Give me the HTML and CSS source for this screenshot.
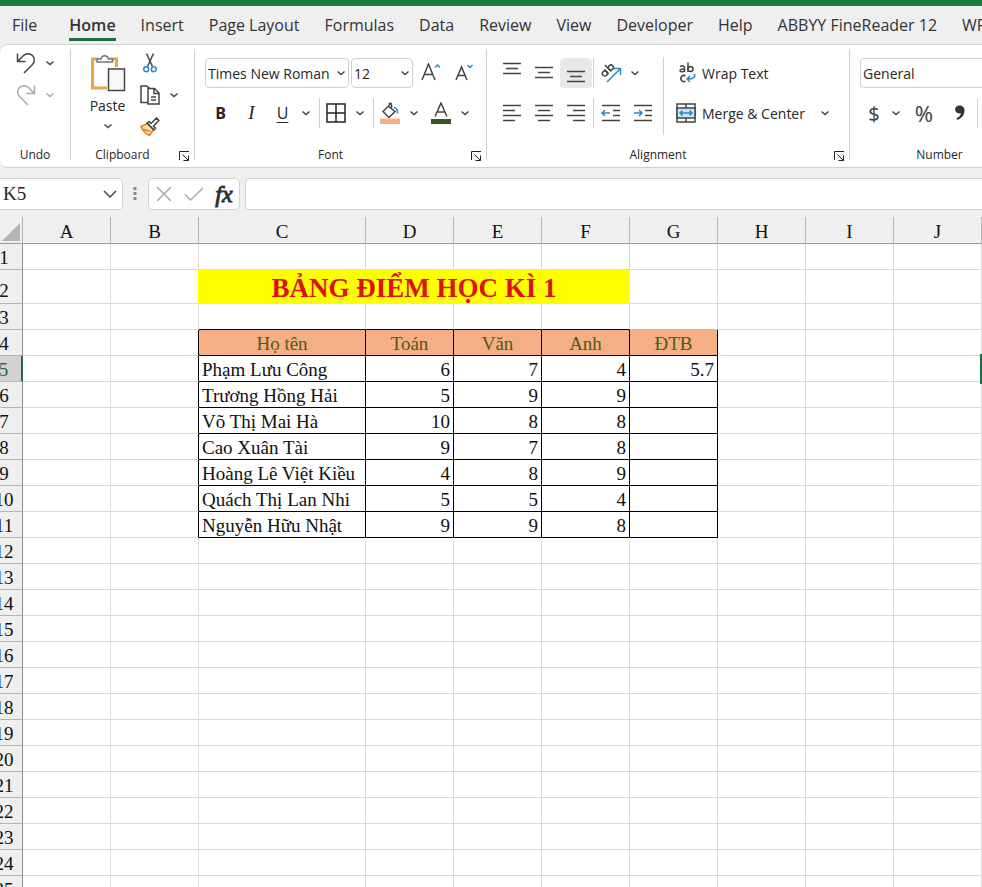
FILE: index.html
```
<!DOCTYPE html>
<html lang="vi">
<head>
    <meta charset="UTF-8">
    <meta name="viewport" content="width=device-width, initial-scale=1.0">
    <title>Bảng điểm</title>
    <link rel="stylesheet" href="styles.css">
</head>
<body>
    <!-- shared icons -->
    <svg class="sprite" aria-hidden="true">
        <symbol id="chevron" viewBox="0 0 10 10"><path d="M1.500 3.500L5 6.500l3.500-3" /></symbol>
        <symbol id="launcher" viewBox="0 0 12 12"><path d="M1.5 10V1.5H11M4.5 4.5l6 6M10.500 5.500v5h-5" /></symbol>
    </svg>

    <div class="title-strip"></div>
    <nav class="tabs">
        <a href="#" class="file">File</a>
        <a href="#" class="active">Home</a>
        <a href="#">Insert</a>
        <a href="#">Page Layout</a>
        <a href="#">Formulas</a>
        <a href="#">Data</a>
        <a href="#">Review</a>
        <a href="#">View</a>
        <a href="#">Developer</a>
        <a href="#">Help</a>
        <a href="#">ABBYY FineReader 12</a>
        <a href="#">WPS PDF</a>
    </nav>

    <div class="ribbon">
        <div class="group undo">
            <div class="stack">
                <div class="row">
                    <button class="btn" aria-label="Undo"><svg width="20" height="22" viewBox="0 0 20 22"><path d="M1.500 1.500v8h8M2 9l5.500-5.500a6.300 6.300 0 0 1 9 9L8 21" /></svg></button>
                    <button class="more" aria-label="Undo list"><svg><use href="#chevron" /></svg></button>
                </div>
                <div class="row off">
                    <button class="btn" aria-label="Redo" disabled><svg width="20" height="22" viewBox="0 0 20 22"><path d="M18.500 1.500v8h-8M18 9l-5.500-5.500a6.300 6.300 0 0 0-9 9L12 21" /></svg></button>
                    <button class="more" aria-label="Redo list" disabled><svg><use href="#chevron" /></svg></button>
                </div>
            </div>
            <div class="caption"><span>Undo</span></div>
        </div>
        <div class="divider"></div>

        <div class="group clipboard">
            <div class="clip-body">
                <button class="paste">
                    <svg width="36" height="40" viewBox="0 0 36 40">
                        <path class="orange" d="M9 6H2.500v29H17M20 6h6.500v8" />
                        <path class="pale" d="M7 9V6h4a3.800 3.800 0 0 1 7.500 0h4v3z" />
                        <path class="sheet" d="M18.500 16h16v21.500h-16z" />
                    </svg>
                    <span>Paste</span>
                    <svg class="chev"><use href="#chevron" /></svg>
                </button>
                <div class="stack">
                    <div class="row">
                        <button class="btn" aria-label="Cut"><svg width="14" height="20" viewBox="0 0 14 20"><path d="M3.500 0.500l6 13M10.500 0.500l-6 13" /><g class="blue"><circle cx="3.200" cy="16.200" r="2.500" /><circle cx="10.800" cy="16.200" r="2.500" /></g></svg></button>
                    </div>
                    <div class="row">
                        <button class="btn" aria-label="Copy"><svg width="20" height="20" viewBox="0 0 20 20"><path d="M8 17.500H1V1h5.500l3 2M8 3.500h6.500L19 8v11H8zM14 4v4.500h5M11 12h5M11 15h5" /></svg></button>
                        <button class="more" aria-label="Copy options"><svg><use href="#chevron" /></svg></button>
                    </div>
                    <div class="row">
                        <button class="btn" aria-label="Format Painter"><svg width="20" height="20" viewBox="0 0 20 20"><path class="brush" d="M7.500 6.500L1 9.500c1.500 4 4.500 7 8.500 9l4-6zM3 12.500l7 1.500" /><path d="M7 6l2-1.500 2 2L16.500 1 19 3.500 13.500 9l2 2-1.500 2z" /></svg></button>
                    </div>
                </div>
            </div>
            <div class="caption"><span>Clipboard</span><button class="launch" aria-label="Clipboard settings"><svg><use href="#launcher" /></svg></button></div>
        </div>
        <div class="divider"></div>

        <div class="group font">
            <div class="rows">
                <div class="row spaced">
                    <div class="pick family">
                        <select aria-label="Font"><option>Times New Roman</option></select>
                        <svg><use href="#chevron" /></svg>
                    </div>
                    <div class="pick size">
                        <select aria-label="Font size"><option>12</option></select>
                        <svg><use href="#chevron" /></svg>
                    </div>
                    <button class="btn" aria-label="Increase font size"><svg width="22" height="20" viewBox="0 0 22 20"><path d="M2 17L8.500 1 15 17M4.500 11.500h8" /><path class="blue" d="M15 4.500l2.500-2.500L20 4.500" /></svg></button>
                    <button class="btn" aria-label="Decrease font size"><svg width="22" height="20" viewBox="0 0 22 20"><path d="M2 17L7.500 4 13 17M4 12.500h7" /><path class="blue" d="M13.500 2l2.500 2.500L18.500 2" /></svg></button>
                </div>
                <div class="row">
                    <button class="btn bold">B</button>
                    <button class="btn italic">I</button>
                    <button class="btn under">U</button>
                    <button class="more" aria-label="Underline options"><svg><use href="#chevron" /></svg></button>
                    <div class="bar"></div>
                    <button class="btn" aria-label="Borders"><svg class="dark" width="20" height="20" viewBox="0 0 20 20"><path d="M1 1h18v18H1zM10 1v18M1 10h18" /></svg></button>
                    <button class="more" aria-label="Border options"><svg><use href="#chevron" /></svg></button>
                    <div class="bar"></div>
                    <button class="btn" aria-label="Fill color"><svg width="22" height="22" viewBox="0 0 22 22"><path d="M9 4l7 5.500-6 6-6-6L10.500 3V1M10.500 1a2 2 0 0 1 2 2v4" /><path class="blue" d="M15 5.500c3 0 3.500 2 3.500 6" /><path class="peach" d="M1 16.500h20V22H1z" /></svg></button>
                    <button class="more" aria-label="Fill options"><svg><use href="#chevron" /></svg></button>
                    <div class="gap"></div>
                    <button class="btn" aria-label="Font color"><svg width="22" height="22" viewBox="0 0 22 22"><path d="M5 14.500L11 1l6 13.500M7 10h8" /><path class="green" d="M1 17h20v5H1z" /></svg></button>
                    <button class="more" aria-label="Font color options"><svg><use href="#chevron" /></svg></button>
                </div>
            </div>
            <div class="caption"><span>Font</span><button class="launch" aria-label="Font settings"><svg><use href="#launcher" /></svg></button></div>
        </div>
        <div class="divider"></div>

        <div class="group alignment">
            <div class="align-body">
                <div class="rows">
                    <div class="row">
                        <button class="btn" aria-label="Top align"><svg width="20" height="22" viewBox="0 0 20 22"><path d="M1 1.500h18M4 6.500h12M1 11.500h18" /></svg></button>
                        <button class="btn" aria-label="Middle align"><svg width="20" height="22" viewBox="0 0 20 22"><path d="M1 5.500h18M4 10.500h12M1 15.500h18" /></svg></button>
                        <button class="btn pressed" aria-label="Bottom align"><svg width="20" height="22" viewBox="0 0 20 22"><path d="M1 9.500h18M4 14.500h12M1 19.500h18" /></svg></button>
                        <div class="bar thin"></div>
                        <button class="btn" aria-label="Orientation"><svg width="22" height="22" viewBox="0 0 22 22"><g transform="rotate(-45 7 8)"><circle cx="3" cy="9" r="2.500" /><path d="M5.500 6v6M9 3v9" /><circle cx="11.500" cy="9" r="2.500" /></g><path class="blue" d="M7 20L20 7M14 6.500h6.500V13" /></svg></button>
                        <button class="more" aria-label="Orientation options"><svg><use href="#chevron" /></svg></button>
                    </div>
                    <div class="row">
                        <button class="btn" aria-label="Align left"><svg width="20" height="20" viewBox="0 0 20 20"><path d="M1 2.500h18M1 7.500h12M1 12.500h18M1 17.500h12" /></svg></button>
                        <button class="btn" aria-label="Center"><svg width="20" height="20" viewBox="0 0 20 20"><path d="M1 2.500h18M4 7.500h12M1 12.500h18M4 17.500h12" /></svg></button>
                        <button class="btn" aria-label="Align right"><svg width="20" height="20" viewBox="0 0 20 20"><path d="M1 2.500h18M7 7.500h12M1 12.500h18M7 17.500h12" /></svg></button>
                        <div class="bar thin"></div>
                        <button class="btn" aria-label="Decrease indent"><svg width="20" height="20" viewBox="0 0 20 20"><path d="M1 2.500h18M12 7.500h7M12 12.500h7M1 17.500h18" /><path class="blue" d="M9 10H1.500M4 7l-3 3 3 3" /></svg></button>
                        <button class="btn" aria-label="Increase indent"><svg width="20" height="20" viewBox="0 0 20 20"><path d="M1 2.500h18M12 7.500h7M12 12.500h7M1 17.500h18" /><path class="blue" d="M1 10h7.500M6 7l3 3-3 3" /></svg></button>
                    </div>
                </div>
                <div class="tall-bar"></div>
                <div class="rows">
                    <button class="wide">
                        <svg width="20" height="22" viewBox="0 0 20 22"><path d="M4 4.500c3-1.500 4.500-.5 4.500 1.500v4M8.500 7C5 7 4 7.500 4 8.700s3 1.800 4.500 0M12 0.500V10M9.500 14a3 3 0 1 0 0 5" /><circle cx="14.500" cy="7" r="2.500" /><path class="blue" d="M18.500 12c1 3-1 5-7 5M14 14l-3 3 3 3" /></svg>
                        <span>Wrap Text</span>
                    </button>
                    <div class="row">
                        <button class="wide">
                            <svg width="20" height="20" viewBox="0 0 20 20"><path d="M1 1h18v18H1zM10 1v4M10 15v4" /><path class="cell" d="M1 5h18v10H1z" /><path class="blue" d="M4 10h12M6.500 7.500L4 10l2.500 2.500M13.500 7.500L16 10l-2.500 2.500" /></svg>
                            <span>Merge &amp; Center</span>
                        </button>
                        <button class="more last" aria-label="Merge options"><svg><use href="#chevron" /></svg></button>
                    </div>
                </div>
            </div>
            <div class="caption"><span>Alignment</span><button class="launch" aria-label="Alignment settings"><svg><use href="#launcher" /></svg></button></div>
        </div>
        <div class="divider"></div>

        <div class="group number">
            <div class="rows">
                <div class="pick format">
                    <select aria-label="Number format"><option>General</option></select>
                    <svg><use href="#chevron" /></svg>
                </div>
                <div class="row">
                    <button class="btn sign">$</button>
                    <button class="more" aria-label="Currency options"><svg><use href="#chevron" /></svg></button>
                    <button class="btn sign percent">%</button>
                    <button class="btn comma-btn" aria-label="Comma style"><svg width="12" height="18" viewBox="0 0 12 18"><path class="comma" d="M5.500 1.500a4 4 0 1 0 1.500 7.500c-.5 2.500-2 4-4.500 5.500l1 1.500C8 14 10.500 11 10.500 6.500c0-3-2-5-5-5z" /></svg></button>
                    <div class="bar thin"></div>
                </div>
            </div>
            <div class="caption"><span>Number</span><button class="launch" aria-label="Number settings"><svg><use href="#launcher" /></svg></button></div>
        </div>
    </div>

    <div class="formula-bar">
        <div class="name-box">
            <input type="text" value="K5" aria-label="Name box">
            <svg width="14" height="10" viewBox="0 0 14 10"><path d="M1 2l6 6 6-6" /></svg>
        </div>
        <svg class="dots" width="4" height="14" viewBox="0 0 4 14"><path d="M.5 0h3v3h-3zM.5 5h3v3h-3zM.5 10h3v3h-3z" /></svg>
        <div class="fx-box">
            <button aria-label="Cancel"><svg width="16" height="16" viewBox="0 0 16 16"><path d="M1 1l14 14M15 1L1 15" /></svg></button>
            <button aria-label="Enter"><svg width="20" height="14" viewBox="0 0 20 14"><path d="M1 7.500L6.500 13 19 1" /></svg></button>
            <button class="fx">fx</button>
        </div>
        <input class="formula" type="text" aria-label="Formula">
    </div>

    <div class="sheet-view">
        <table class="grid">
            <colgroup id="cols"></colgroup>
            <thead><tr id="letters"></tr></thead>
            <tbody id="cells"></tbody>
        </table>
    </div>

    <script>
        const letters = "ABCDEFGHIJK".split("");
        const rowCount = 25;
        // row 4 is the header of the score table, the students come after it
        const scores = [
            ["Họ tên", "Toán", "Văn", "Anh", "ĐTB"],
            ["Phạm Lưu Công", 6, 7, 4, 5.7],
            ["Trương Hồng Hải", 5, 9, 9, ""],
            ["Võ Thị Mai Hà", 10, 8, 8, ""],
            ["Cao Xuân Tài", 9, 7, 8, ""],
            ["Hoàng Lê Việt Kiều", 4, 8, 9, ""],
            ["Quách Thị Lan Nhi", 5, 5, 4, ""],
            ["Nguyễn Hữu Nhật", 9, 9, 8, ""]
        ];

        let cols = `<col class="col-num">`;
        let head = `<th class="corner"><svg width="18" height="18" viewBox="0 0 18 18"><path d="M18 0v18H0z" /></svg></th>`;
        letters.forEach(l => {
            cols += `<col class="${l == "C" ? "col-name" : "col"}">`;
            head += `<th>${l}</th>`;
        });
        document.querySelector("#cols").innerHTML = cols;
        document.querySelector("#letters").innerHTML = head;

        let body = "";
        for (let r = 1; r <= rowCount; r++) {
            body += `<tr class="r${r}"><th${r == 5 ? ' class="current"' : ""}>${r}</th>`;
            letters.forEach((l, i) => {
                if (r == 2 && "DEF".includes(l)) return;
                if (r == 2 && l == "C") {
                    body += `<td class="title" colspan="4">BẢNG ĐIỂM HỌC KÌ 1</td>`;
                    return;
                }
                let data = scores[r - 4];
                let cls = "";
                let text = "";
                if (data && i >= 2 && i <= 6) {
                    text = data[i - 2];
                    cls = r == 4 ? "label" : (l == "C" ? "name" : "score");
                }
                if (data && l == "B") cls = "edge-right";
                if (r == 2 && l == "B") cls = "edge-yellow";
                if (r == 3 && "CDEF".includes(l)) cls = "edge-bottom";
                if (r == 3 && l == "G") cls = "edge-fill";
                if (r == 5 && l == "K") cls = "selected";
                body += `<td class="${cls}">${text}</td>`;
            });
            body += "</tr>";
        }
        document.querySelector("#cells").innerHTML = body;
    </script>
</body>
</html>
```
FILE: styles.css
```
* {
    box-sizing: border-box;
    margin: 0;
    padding: 0;
}

body {
    height: 100vh;
    display: flex;
    flex-direction: column;
    overflow: hidden;
    background-color: #efefef;
    color: #262626;
    font-family: "Open Sans", "Noto Sans", sans-serif;
    font-size: 14px;
}

button,
select,
input {
    border: none;
    background: none;
    color: inherit;
    font: inherit;
}

svg {
    display: block;
    flex: none;
    fill: none;
    stroke: #444;
    stroke-width: 1.5;
}

.sprite {
    position: absolute;
    width: 0;
    height: 0;
}

.title-strip {
    flex: none;
    height: 6px;
    background-color: #17803f;
}

/* tabs */
.tabs {
    flex: none;
    display: flex;
    gap: 25px;
    height: 38px;
    padding-left: 12px;
    overflow: hidden;
}

.tabs a {
    flex: none;
    height: 35px;
    color: #333;
    font-size: 16px;
    line-height: 38px;
    text-decoration: none;
    white-space: nowrap;
}

.tabs .file {
    margin-right: 7px;
}

.tabs .active {
    border-bottom: 3px solid #1e6c41;
    font-weight: 600;
}

/* ribbon */
.ribbon {
    flex: none;
    display: flex;
    height: 124px;
    overflow: hidden;
    background-color: #fff;
    border: 1px solid #d0d0d0;
    border-width: 1px 0;
    border-radius: 8px 0 0 8px;
}

.divider {
    flex: none;
    width: 1px;
    margin: 4px 0 7px;
    background-color: #d0d0d0;
}

.group {
    flex: none;
    display: flex;
    flex-direction: column;
    justify-content: space-between;
}

.undo {
    width: 70px;
    padding-left: 10px;
}

.undo .btn,
.undo .more {
    height: 32px;
}

.undo .caption {
    margin-right: 10px;
}

.clipboard {
    width: 123px;
}

.font {
    width: 291px;
}

.alignment {
    width: 362px;
}

.number {
    width: 199px;
}

.caption {
    display: flex;
    height: 23px;
    font-size: 12px;
    line-height: 22px;
}

.caption span {
    flex: 1;
    text-align: center;
}

.launch {
    width: 20px;
    display: flex;
    align-items: center;
    justify-content: center;
}

.launch svg {
    width: 12px;
    height: 12px;
    stroke-width: 1;
}

.row {
    display: flex;
    align-items: center;
}

.spaced {
    gap: 2px;
}

.rows {
    display: flex;
    flex-direction: column;
    gap: 10px;
    padding-top: 13px;
}

.font .rows,
.number .rows {
    padding-left: 10px;
}

.stack {
    padding-top: 2px;
}

.stack .row {
    height: 32px;
}

.off {
    opacity: 0.45;
}

.btn {
    flex: none;
    display: flex;
    align-items: center;
    justify-content: center;
    width: 32px;
    height: 30px;
    border-radius: 4px;
}

.more {
    flex: none;
    display: flex;
    align-items: center;
    justify-content: center;
    width: 16px;
    height: 30px;
}

.more svg,
.pick svg,
.chev {
    width: 10px;
    height: 10px;
}

.pressed {
    background-color: #e8e8e8;
}

.bar {
    flex: none;
    width: 1px;
    height: 30px;
    margin-left: 5px;
    background-color: #d0d0d0;
}

.thin {
    margin: 0 1px;
}

.gap {
    width: 3px;
}

.tall-bar {
    width: 1px;
    height: 78px;
    margin: 12px 5px 0 4px;
    background-color: #d0d0d0;
}

.clip-body {
    display: flex;
}

.paste {
    width: 63px;
    padding: 8px 0 0 10px;
    display: flex;
    flex-direction: column;
    align-items: center;
    font-size: 14px;
    line-height: 26px;
}

.paste .chev {
    margin-top: 2px;
}

.align-body {
    display: flex;
    padding-left: 9px;
}

.pick {
    display: flex;
    align-items: center;
    height: 30px;
    padding-right: 2px;
    border: 1px solid #cfcfcf;
    border-radius: 4px;
}

.pick select {
    flex: 1;
    min-width: 0;
    height: 28px;
    padding-left: 2px;
    appearance: none;
    outline: none;
}

.family {
    width: 144px;
}

.size {
    width: 62px;
}

.format {
    width: 170px;
}

.bold,
.italic,
.under {
    width: 31px;
}

.bold {
    font-size: 16px;
    font-weight: 700;
}

.italic {
    font-family: "Liberation Serif", serif;
    font-size: 19px;
    font-style: italic;
}

.under {
    font-size: 16px;
    text-decoration: underline;
    text-underline-offset: 3px;
}

.sign {
    width: 28px;
    color: #444;
    font-family: "Noto Sans", sans-serif;
    font-size: 20px;
}

.percent {
    width: 40px;
    font-size: 22px;
}

.wide {
    display: flex;
    align-items: center;
    height: 30px;
    white-space: nowrap;
}

.wide svg {
    margin: 0 6px 0 7px;
}

.last {
    margin-left: 12px;
}

.blue {
    stroke: #2b88c8;
}

.orange {
    stroke: #eba541;
    stroke-width: 3;
}

.pale {
    fill: #fff;
    stroke: #777;
}

.sheet {
    fill: #f8f8f8;
}

.brush {
    fill: #fbdca8;
    stroke: #d98324;
}

.peach {
    fill: #f4b084;
    stroke: none;
}

.green {
    fill: #375623;
    stroke: none;
}

.cell {
    fill: #c9e7f8;
}

.dark,
.launch svg {
    stroke: #222;
}

.comma {
    fill: #333;
    stroke: none;
}

/* formula bar */
.formula-bar {
    flex: none;
    display: flex;
    align-items: center;
    height: 49px;
    padding: 10px 0 7px;
    overflow: hidden;
}

.name-box,
.fx-box,
.formula {
    height: 32px;
    background-color: #fff;
    border: 1px solid #d0d0d0;
    border-radius: 5px;
}

.name-box {
    flex: none;
    display: flex;
    align-items: center;
    width: 123px;
    padding-right: 5px;
    border-left: none;
    border-radius: 0 5px 5px 0;
}

.name-box input {
    flex: 1;
    min-width: 0;
    padding-left: 3px;
    font-family: "Liberation Serif", serif;
    font-size: 19px;
}

.dots {
    margin: 0 11px 0 10px;
    fill: #888;
    stroke: none;
}

.fx-box {
    flex: none;
    display: flex;
    align-items: center;
    width: 92px;
    margin-right: 5px;
}

.fx-box button {
    flex: 1;
    display: flex;
    justify-content: center;
}

.fx-box svg {
    stroke: #aaa;
}

.fx-box .fx {
    font-family: "Liberation Serif", serif;
    font-size: 24px;
    font-style: italic;
    line-height: 28px;
    -webkit-text-stroke: 1px #333;
}

.formula {
    flex: 1;
    min-width: 0;
    padding: 0 8px;
    border-right: none;
    border-radius: 5px 0 0 5px;
}

/* sheet, scrolled a little to the right */
.sheet-view {
    flex: 1;
    min-height: 0;
    overflow: hidden;
}

.grid {
    width: max-content;
    margin-left: -14px;
    table-layout: fixed;
    border-spacing: 0;
    background-color: #fff;
    color: #111;
    font-family: "Liberation Serif", serif;
    font-size: 19px;
    line-height: 23px;
}

.col-num {
    width: 37px;
}

.col {
    width: 88px;
}

.col-name {
    width: 167px;
}

.grid th {
    height: 26px;
    padding-top: 2px;
    background-color: #efefef;
    border-right: 1px solid #8c8c8c;
    border-bottom: 1px solid #b5b5b5;
    font-weight: 400;
}

.grid thead th {
    height: 27px;
    padding-top: 3px;
    border-right-color: #b5b5b5;
    border-bottom-color: #999;
}

.grid .corner svg {
    margin: 0 2px 0 auto;
    fill: #b5b5b5;
    stroke: none;
}

.grid .current {
    background-color: #d2d2d2;
    border-right: 2px solid #1e6c41;
    color: #1e6c41;
}

.grid td {
    height: 26px;
    padding: 2px 3px 0;
    border-right: 1px solid #dadada;
    border-bottom: 1px solid #dadada;
    white-space: nowrap;
}

.grid .r2 th {
    height: 34px;
    padding-top: 8px;
}

.grid .title {
    background-color: #ff0;
    border-color: #ff0;
    color: #e01010;
    font-size: 27px;
    font-weight: 700;
    line-height: 30px;
    text-align: center;
}

.grid .label,
.grid .name,
.grid .score {
    border-color: #000;
}

.grid .label {
    background-color: #f4b084;
    color: #4f5a1c;
    text-align: center;
}

.grid .score {
    text-align: right;
}

.grid .edge-right {
    border-right-color: #000;
}

.grid .edge-yellow {
    border-right-color: #ff0;
}

.grid .edge-bottom {
    border-bottom-color: #000;
}

.grid .edge-fill {
    border-bottom-color: #f4b084;
}

.grid .selected {
    outline: 2px solid #1e6c41;
}
```
